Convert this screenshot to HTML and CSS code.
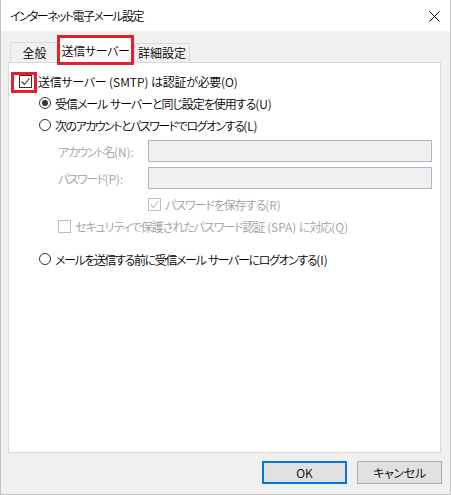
FILE: index.html
```html
<!DOCTYPE html>
<html lang="ja">
<head>
    <meta charset="UTF-8">
    <meta name="viewport" content="width=device-width, initial-scale=1.0">
    <title>インターネット電子メール設定</title>
    <link rel="stylesheet" href="styles.css">
</head>
<body>
    <div class="window">
        <div class="titlebar">
            <span class="title tight-xl">インターネット電子メール設定</span>
            <svg class="close" width="11" height="11" viewBox="0 0 11 11">
                <path d="M0.5 0.5 L10.5 10.5 M10.5 0.5 L0.5 10.5" stroke="#000" stroke-width="1" fill="none"/>
            </svg>
        </div>

        <div class="tabs">
            <div class="tab tab-general">全般</div>
            <div class="tab tab-active marked">送信サーバー</div>
            <div class="tab tab-detail">詳細設定</div>
        </div>

        <div class="panel">
            <div class="row row-auth">
                <span class="check checked marked-box">
                    <svg width="11" height="11" viewBox="0 0 11 11"><path d="M1.5 5.5 L4.5 8.5 L9.5 2" stroke="#333" stroke-width="1.1" fill="none"/></svg>
                </span>
                <span class="tight-s">送信サーバー<span class="ak"> (SMTP) </span>は認証が必要<span class="ak">(O)</span></span>
            </div>
            <div class="row indent">
                <span class="radio selected"></span>
                <span class="tight-m">受信メール<span class="ak"> </span>サーバーと同じ設定を使用する<span class="ak">(U)</span></span>
            </div>
            <div class="row indent">
                <span class="radio"></span>
                <span class="tight-l">次のアカウントとパスワードでログオンする<span class="ak">(L)</span></span>
            </div>

            <div class="field field-first">
                <label class="field-label tight-l">アカウント名<span class="ak">(N):</span></label>
                <div class="input"></div>
            </div>
            <div class="field">
                <label class="field-label tight-l">パスワード<span class="ak">(P):</span></label>
                <div class="input"></div>
            </div>

            <div class="row save-row disabled">
                <span class="check checked">
                    <svg width="11" height="11" viewBox="0 0 11 11"><path d="M1.5 5.5 L4.5 8.5 L9.5 2" stroke="#bcbcbc" stroke-width="1.1" fill="none"/></svg>
                </span>
                <span class="tight-m">パスワードを保存する<span class="ak">(R)</span></span>
            </div>
            <div class="row spa-row disabled">
                <span class="check"></span>
                <span class="tight-m">セキュリティで保護されたパスワード認証<span class="ak"> (SPA) </span>に対応<span class="ak">(Q)</span></span>
            </div>

            <div class="row indent pop-row">
                <span class="radio"></span>
                <span class="tight-ml">メールを送信する前に受信メール<span class="ak"> </span>サーバーにログオンする<span class="ak">(I)</span></span>
            </div>
        </div>

        <div class="buttons">
            <button class="btn btn-default">OK</button>
            <button class="btn tight-s">キャンセル</button>
        </div>
    </div>
</body>
</html>
```

FILE: styles.css
```css
body {
    margin: 0;
    background: #f0f0f0;
    font-family: "Noto Sans CJK JP", "Noto Sans", sans-serif;
    font-size: 12px;
    font-weight: 350;
    font-feature-settings: "palt";
    color: #000;
}

/* Meiryo UI kana run much narrower than Noto's, so pull them in */
.tight-s { letter-spacing: -0.3px; }
.tight-m { letter-spacing: -1.05px; }
.tight-ml { letter-spacing: -1.4px; }
.tight-l { letter-spacing: -1.5px; }
.tight-xl { letter-spacing: -1.6px; }
.ak { letter-spacing: 0; }

.window {
    width: 451px;
    height: 495px;
    box-sizing: border-box;
    border: 1px solid #c4c4c4;
    border-top: none;
    background: #f0f0f0;
    display: flex;
    flex-direction: column;
}
.titlebar {
    height: 31px;
    background: #fff;
    display: flex;
    align-items: center;
    justify-content: space-between;
    padding: 0 10px 0 9px;
}
.close {
    display: block;
    margin-top: 1px;
}

/* tabs */
.tabs {
    height: 31px;
    display: flex;
    align-items: flex-end;
    padding-left: 9px;
}
.tab {
    height: 20px;
    box-sizing: border-box;
    border: 1px solid #d9d9d9;
    border-bottom: none;
    background: #f0f0f0;
    display: flex;
    align-items: center;
    justify-content: center;
    line-height: 1;
}
.tab-general {
    width: 49px;
    padding-top: 1px;
}
.tab-active {
    width: 73px;
    height: 26px;
    margin-bottom: -1px;
    background: #fff;
    position: relative;
    z-index: 1;
    letter-spacing: -0.4px;
}
.tab-detail {
    width: 56px;
    margin-left: 2px;
    height: 19px;
}
.marked::after {
    content: "";
    position: absolute;
    left: -3px;
    top: -3px;
    right: -3px;
    bottom: -2px;
    border: 3px solid #e4202a;
}

/* panel */
.panel {
    height: 391px;
    box-sizing: border-box;
    margin: 0 9px 0 7px;
    background: #fff;
    border: 1px solid #d9d9d9;
    padding: 7px 8px 0 10px;
    display: flex;
    flex-direction: column;
}
.row {
    height: 22px;
    display: flex;
    align-items: center;
    white-space: nowrap;
}
.indent {
    padding-left: 20px;
}
.check {
    width: 13px;
    height: 13px;
    box-sizing: border-box;
    border: 1px solid #333;
    background: #fff;
    display: inline-flex;
    align-items: center;
    justify-content: center;
    margin-right: 6px;
    flex-shrink: 0;
}
.marked-box {
    position: relative;
}
.marked-box::after {
    content: "";
    position: absolute;
    left: -9px;
    top: -4px;
    width: 20px;
    height: 15px;
    border: 3px solid #e4202a;
}
.radio {
    width: 12px;
    height: 12px;
    box-sizing: border-box;
    border: 1px solid #333;
    border-radius: 50%;
    background: #fff;
    margin-right: 4px;
    display: inline-flex;
    align-items: center;
    justify-content: center;
    flex-shrink: 0;
}
.radio.selected::before {
    content: "";
    width: 6px;
    height: 6px;
    border-radius: 50%;
    background: #333;
}

.field {
    display: flex;
    align-items: center;
    margin-top: 5px;
    padding-left: 39px;
}
.field-first {
    margin-top: 4px;
}
.field-label {
    width: 90px;
    color: #a0a0a0;
}
.input {
    flex: 1;
    height: 22px;
    box-sizing: border-box;
    border: 1px solid #abb7c6;
    background: #f0f0f0;
}

.disabled {
    color: #a0a0a0;
}
.disabled .check {
    border-color: #bcbcbc;
    margin-right: 4px;
}
.save-row {
    margin-top: 4px;
    padding-left: 129px;
}
.spa-row {
    padding-left: 39px;
}
.pop-row {
    margin-top: 11px;
}

/* buttons */
.buttons {
    display: flex;
    justify-content: flex-end;
    gap: 10px;
    padding: 8px 8px 0 0;
}
.btn {
    width: 85px;
    height: 23px;
    box-sizing: border-box;
    border: 1px solid #adadad;
    background: #e1e1e1;
    font-family: inherit;
    font-size: 12px;
    font-weight: 350;
    font-feature-settings: "palt";
    color: #000;
    padding: 0;
}
.btn-default {
    border: 2px solid #0078d7;
}
```
